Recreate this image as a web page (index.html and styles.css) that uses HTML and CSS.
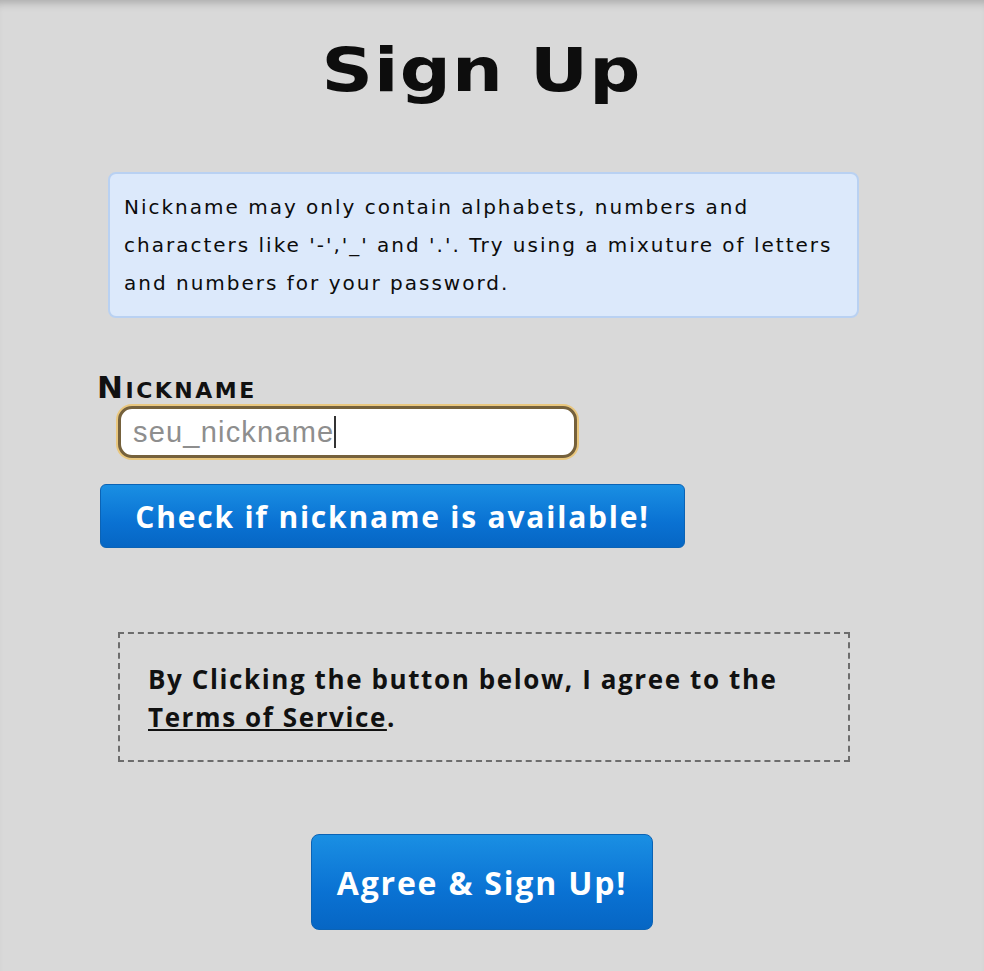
FILE: index.html
```html
<!DOCTYPE html>
<html lang="en">
<head>
  <meta charset="UTF-8">
  <meta name="viewport" content="width=device-width, initial-scale=1.0">
  <title>Sign Up</title>
  <link rel="stylesheet" href="styles.css">
</head>
<body>
  <div class="page">
    <h1><span>Sign Up</span></h1>
    <form id="signupForm" class="signup">
      <div class="notice">
        <p>Nickname may only contain alphabets, numbers and<br>characters like '-','_' and '.'. Try using a mixuture of letters<br>and numbers for your password.</p>
      </div>

      <div class="field">
        <label for="nickname">Nickname</label>
        <div class="input-box">
          <span id="nickname" class="input-text">seu_nickname</span><span class="caret"></span>
        </div>
      </div>

      <button type="button" class="btn btn-check">Check if nickname is available!</button>

      <div class="terms">
        <p>By Clicking the button below, I agree to the<br><a href="#">Terms of Service</a>.</p>
      </div>

      <div class="actions">
        <button type="submit" class="btn btn-signup">Agree &amp; Sign Up!</button>
      </div>
    </form>
  </div>
</body>
</html>
```

FILE: styles.css
```css
html, body {
  margin: 0;
  padding: 0;
}
body {
  background: #d9d9d9;
  font-family: "DejaVu Sans", Verdana, sans-serif;
  color: #111;
  min-height: 971px;
  box-shadow: inset 0 9px 9px -6px rgba(0, 0, 0, 0.22);
}
.page {
  width: 770px;
  margin-left: 97px;
  padding-top: 30px;
}
h1 {
  margin: 0;
  text-align: center;
  font-size: 60px;
  font-weight: bold;
  line-height: 80px;
  color: #0d0d0d;
}
h1 span {
  display: inline-block;
  transform: scaleX(1.19);
  letter-spacing: 1px;
}
.notice {
  margin: 62px 0 0 11px;
  width: 751px;
  box-sizing: border-box;
  background: #dce9fb;
  border: 2px solid #b9d1f2;
  border-radius: 8px;
  padding: 14px 10px 14px 14px;
}
.notice p {
  margin: 0;
  font-size: 20px;
  line-height: 38px;
  letter-spacing: 2px;
  white-space: nowrap;
  color: #0c0c0c;
}
.field {
  margin-top: 52px;
}
.field label {
  display: block;
  font-size: 31px;
  font-weight: bold;
  font-variant: small-caps;
  line-height: 34px;
  letter-spacing: 2.5px;
}
.input-box {
  margin: 2px 0 0 21px;
  width: 459px;
  height: 52px;
  box-sizing: border-box;
  background: #fff;
  border: 3px solid #75613c;
  border-radius: 14px;
  box-shadow: 0 0 0 2px #e9c77e;
  padding: 0 12px;
  display: flex;
  align-items: center;
  font-family: "Liberation Sans", Arial, sans-serif;
  font-size: 29px;
  letter-spacing: 1.2px;
  color: #8e8e8e;
}
.caret {
  display: inline-block;
  width: 2px;
  height: 32px;
  background: #333;
}
.btn {
  border: 1px solid #0b63b5;
  color: #fff;
  font-family: "Open Sans", sans-serif;
  font-weight: bold;
  background: linear-gradient(#1a8fe3, #0a72d3 60%, #0666c4);
  cursor: pointer;
  padding: 0;
}
.btn-check {
  display: block;
  margin: 26px 0 0 3px;
  width: 585px;
  height: 64px;
  border-radius: 6px;
  font-size: 30px;
  letter-spacing: 1.8px;
}
.terms {
  margin: 84px 0 0 21px;
  width: 732px;
  height: 130px;
  box-sizing: border-box;
  border: 2px dashed #6d6d6d;
  padding: 26px 28px;
}
.terms p {
  margin: 0;
  font-family: "Open Sans", sans-serif;
  font-weight: bold;
  font-size: 26px;
  line-height: 38px;
  letter-spacing: 1.6px;
  white-space: nowrap;
}
.terms a {
  color: #111;
}
.actions {
  margin-top: 72px;
  text-align: center;
}
.btn-signup {
  width: 342px;
  height: 96px;
  border-radius: 8px;
  font-size: 32px;
  letter-spacing: 1.8px;
}
```
